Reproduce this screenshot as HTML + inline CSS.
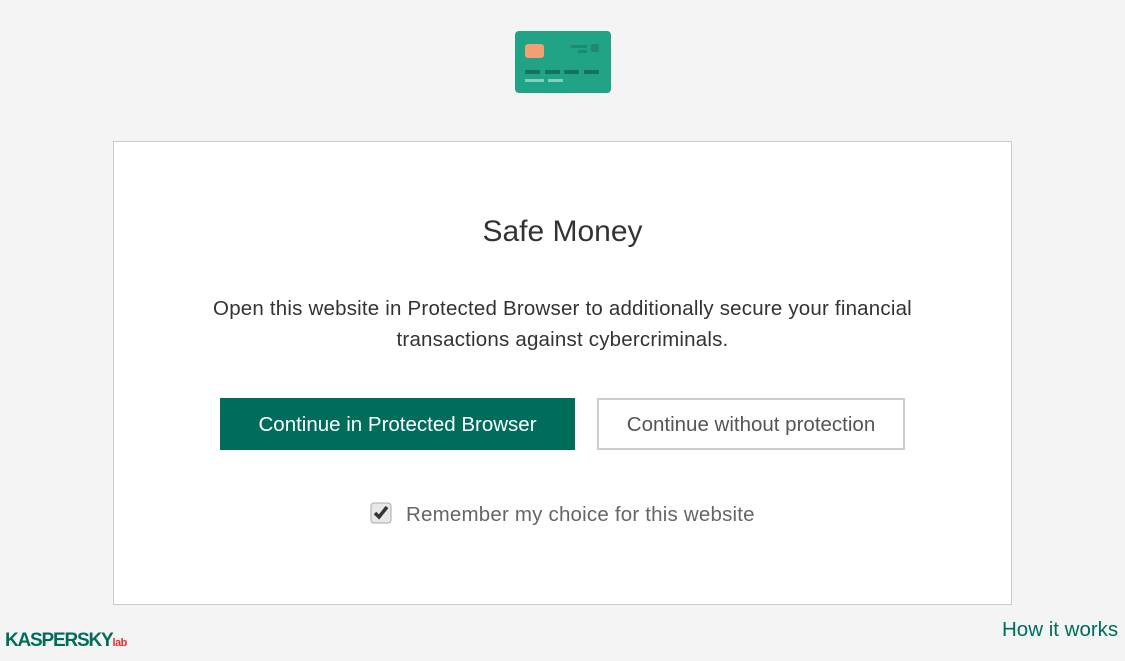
<!DOCTYPE html>
<html><head><style>
body{margin:0;width:1125px;height:661px;background:#f4f4f4;position:relative;overflow:hidden;font-family:"Liberation Sans",sans-serif}
.box{position:absolute;left:113px;top:141px;width:897px;height:462px;background:#fff;border:1px solid #ccc}
.t{position:absolute;left:0;width:100%;text-align:center;color:#333}
.btn{position:absolute;top:398px;height:52px;line-height:52px;text-align:center;font-size:20.5px;box-sizing:border-box}
</style></head><body>
<svg style="position:absolute;left:515px;top:31px" width="96" height="62">
<rect width="96" height="62" rx="4" fill="#21a386"/>
<rect x="10" y="13" width="19" height="14" rx="3" fill="#f0a072"/>
<rect x="56" y="14" width="16" height="3" fill="#1d8a70"/>
<rect x="63" y="19" width="9" height="3" fill="#1d8a70"/>
<rect x="76" y="13" width="8" height="8" rx="2" fill="#1d8a70"/>
<rect x="10" y="39" width="15" height="4" fill="#17735e"/>
<rect x="30" y="39" width="15" height="4" fill="#17735e"/>
<rect x="49" y="39" width="15" height="4" fill="#17735e"/>
<rect x="69" y="39" width="15" height="4" fill="#17735e"/>
<rect x="10" y="48" width="19" height="3" fill="#7fd0bd"/>
<rect x="33" y="48" width="15" height="3" fill="#7fd0bd"/>
</svg>
<div class="box">
<div class="t" style="top:73px;font-size:30px">Safe Money</div>
<div class="t" style="top:151px;font-size:20.5px;line-height:31px;letter-spacing:0.2px">Open this website in Protected Browser to additionally secure your financial<br>transactions against cybercriminals.</div>
</div>
<div class="btn" style="left:220px;width:355px;background:#006d5b;color:#fff;padding-top:1px">Continue in Protected Browser</div>
<div class="btn" style="left:597px;width:308px;background:#fff;border:2px solid #ccc;color:#555;line-height:49px">Continue without protection</div>
<svg style="position:absolute;left:370px;top:502px" width="22" height="22"><rect x="1" y="1" width="20" height="20" rx="3" fill="#e8e8e8" stroke="#aaa"/><path d="M5 11l4 4 8-10" stroke="#333" stroke-width="3.5" fill="none"/></svg>
<div style="position:absolute;left:406px;top:503px;font-size:20.5px;color:#666;letter-spacing:0.2px">Remember my choice for this website</div>
<div style="position:absolute;left:5px;top:630px;font-size:19px;font-weight:bold;color:#006d5b;letter-spacing:-1.2px">KASPERSKY<span style="color:#e0303a;font-size:11px;letter-spacing:-0.5px">lab</span></div>
<div style="position:absolute;left:1002px;top:618px;font-size:20.5px;color:#006d5b">How it works</div>
</body></html>
